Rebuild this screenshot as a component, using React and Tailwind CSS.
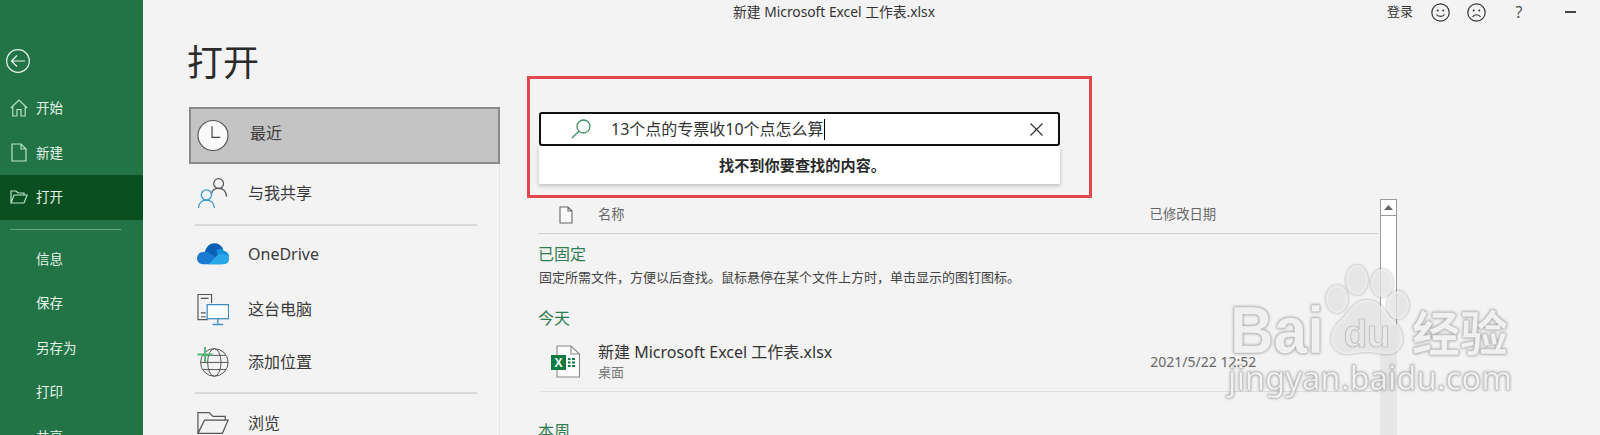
const FONT = { fontFamily: '"Noto Sans", "Noto Sans CJK SC", sans-serif' };

function Side({ icon, label, active, h = 'h-[44.5px]' }) {
  return (
    <div className={`flex items-center shrink-0 ${h} pl-[10px] ${active ? 'bg-[#0a4f20]' : ''}`}>
      <span className="w-[18px] h-[18px] flex items-center justify-center">{icon}</span>
      <span className="ml-[8px] text-[13.5px] text-[#e4f3e8]">{label}</span>
    </div>
  );
}

const sideStroke = { fill: 'none', stroke: '#b9e2c8', strokeWidth: 1.2 };

const HomeIcon = () => (
  <svg width="18" height="18" viewBox="0 0 18 18" {...sideStroke}>
    <path d="M0.8 9 L9 1 L17.2 9 M2.8 7.5 V17 H7 V10.5 H11 V17 H15.2 V7.5" />
  </svg>
);
const NewIcon = () => (
  <svg width="16" height="19" viewBox="0 0 16 19" {...sideStroke}>
    <path d="M1 1 H10 L15 6 V18 H1 Z M10 1 V6 H15" />
  </svg>
);
const OpenIcon = () => (
  <svg width="18" height="14" viewBox="0 0 18 14" {...sideStroke}>
    <path d="M1 13 V1 H6 L8 3 H14 V5 M1 13 L4 5 H17.2 L14 13 Z" />
  </svg>
);

function NavRow({ icon, label, h, extra }) {
  return (
    <div className={`flex items-center shrink-0 ${h} pl-[8px] ${extra || ''}`}>
      <span className="w-[32px] flex justify-center">{icon}</span>
      <span className="ml-[19px] text-[16px] text-[#3a3a3a]">{label}</span>
    </div>
  );
}

const ClockIcon = () => (
  <svg width="33" height="33" viewBox="0 0 33 33">
    <circle cx="16.5" cy="16.5" r="15.5" fill="#fafafa" stroke="#555" strokeWidth="1.2" />
    <path d="M15.5 7 V18.5 H24" fill="none" stroke="#444" strokeWidth="1.2" />
  </svg>
);
const PeopleIcon = () => (
  <svg width="34" height="34" viewBox="0 0 34 34" fill="none">
    <circle cx="23" cy="7" r="5.2" stroke="#555" strokeWidth="1.3" />
    <path d="M15.5 18 C16 13 19 12 23 12 C28 12 31 15 31.5 21" stroke="#555" strokeWidth="1.3" />
    <circle cx="10" cy="19" r="5.4" stroke="#3a9bd0" strokeWidth="1.4" />
    <path d="M1.5 33 C2 27 5 24.5 10 24.5 C15 24.5 18 27 18.5 33" stroke="#3a9bd0" strokeWidth="1.4" />
  </svg>
);
const CloudIcon = () => (
  <svg width="33" height="22" viewBox="0 0 33 22">
    <path d="M8 10 C9 3 14 0 18 0 C22 0 25 2 27 6 L20 16 L8 14 Z" fill="#0a5fb4" />
    <path d="M20 7 C23 5 26 5 28 8 C31 8 33 11 33 14 L22 16 Z" fill="#1490df" />
    <path d="M6 9 C10 8 12 9 14 11 L18 13 L25 21.5 H6 C2 21.5 0 18.5 0 15.5 C0 12 3 9 6 9 Z" fill="#1b7bd0" />
    <path d="M12 21.5 L21 12 C24 10 33 11 33 16 C33 19.5 31 21.5 28 21.5 Z" fill="#28a8ea" />
  </svg>
);
const PcIcon = () => (
  <svg width="33" height="33" viewBox="0 0 33 33" fill="none">
    <path d="M11 27 H1 V1 H15 V10" stroke="#555" strokeWidth="1.2" />
    <path d="M4 5 H12 M4 20 H9 M4 24 H9" stroke="#555" strokeWidth="1.2" />
    <rect x="10.5" y="11.5" width="22" height="14.5" fill="#fbfdff" stroke="#3d8ec4" strokeWidth="1.3" />
    <path d="M21.5 26 V31 M16 32 H27" stroke="#3d8ec4" strokeWidth="1.4" />
  </svg>
);
const GlobeIcon = () => (
  <svg width="36" height="36" viewBox="0 0 36 36" fill="none">
    <g stroke="#555" strokeWidth="1.1">
      <circle cx="19.5" cy="18.5" r="15.5" />
      <ellipse cx="19.5" cy="18.5" rx="7.5" ry="15.5" />
      <path d="M4 18.5 H35 M6.5 10.5 H32.5 M6.5 26.5 H32.5" />
    </g>
    <path d="M9 1 V18 M0.5 9.5 H17.5" stroke="#56b878" strokeWidth="2.2" />
  </svg>
);
const FolderIcon = () => (
  <svg width="34" height="24" viewBox="0 0 34 24" fill="none" stroke="#555" strokeWidth="1.3">
    <path d="M1 23 V1 H13 L17 5 H30 V9 M1 23 L8 9 H33 L27 23 Z" />
  </svg>
);

const FileHeadIcon = () => (
  <svg width="14" height="18" viewBox="0 0 14 18" fill="#fafafa" stroke="#666" strokeWidth="1.1">
    <path d="M1 1 H9 L13 5 V17 H1 Z M9 1 V5 H13" />
  </svg>
);

const ExcelIcon = () => (
  <svg width="30" height="33" viewBox="0 0 30 33">
    <path d="M6 1 H20 L28.5 9 V32 H6 Z" fill="#fbfbfb" stroke="#8a8a8a" strokeWidth="1.1" />
    <path d="M20 1 V9 H28.5" fill="none" stroke="#8a8a8a" strokeWidth="1.1" />
    <rect x="0" y="10" width="15" height="15" fill="#107c41" />
    <text x="7.5" y="21.5" textAnchor="middle" fill="#fff" fontSize="12" fontWeight="700" fontFamily="Liberation Sans, sans-serif">X</text>
    <path d="M17 14 H19.5 M21 14 H24 M17 17.5 H19.5 M21 17.5 H24 M17 21 H19.5 M21 21 H24" stroke="#107c41" strokeWidth="1.8" />
  </svg>
);

function Watermark() {
  const shadow = 'drop-shadow-[0_0_1.5px_rgba(0,0,0,0.45)]';
  return (
    <svg className={`absolute left-[1220px] top-[255px] ${shadow}`} width="300" height="155" viewBox="0 0 300 155">
      <g fill="#ffffff" fillOpacity="0.72">
        <ellipse cx="117" cy="44" rx="11" ry="14" />
        <ellipse cx="137" cy="25" rx="11" ry="15" />
        <ellipse cx="162" cy="28" rx="11" ry="14" />
        <ellipse cx="178" cy="50" rx="11" ry="14" />
        <path d="M147 45 C160 45 165 56 172 64 C184 74 186 88 178 95 C170 103 157 97 147 97 C136 97 124 103 116 95 C108 87 110 74 122 64 C130 56 134 45 147 45 Z" />
      </g>
      <text x="10" y="98" fontSize="66" fontWeight="700" fontFamily="Liberation Sans, sans-serif" fill="#fff" fillOpacity="0.85" stroke="#bdbdbd" strokeWidth="0.5" textLength="94" lengthAdjust="spacingAndGlyphs">Bai</text>
      <text x="147" y="92" textAnchor="middle" fontSize="38" fontWeight="700" fontFamily="Liberation Sans, sans-serif" fill="#e8e8e8" stroke="#b5b5b5" strokeWidth="0.7">du</text>
      <text x="192" y="96" fontSize="48" fontWeight="700" fontFamily="Noto Sans CJK SC, sans-serif" fill="#fff" fillOpacity="0.85" stroke="#c4c4c4" strokeWidth="0.5">经验</text>
      <text x="8" y="135" fontSize="33" fontFamily="Noto Sans, sans-serif" fill="#fff" fillOpacity="0.85" stroke="#bdbdbd" strokeWidth="0.5" textLength="284">jingyan.baidu.com</text>
    </svg>
  );
}

export default function App() {
  return (
    <div className="relative flex w-[1600px] h-[435px] overflow-hidden bg-[#f3f3f3]" style={FONT}>
      {/* Sidebar */}
      <aside className="w-[143px] shrink-0 bg-[#227447] flex flex-col pt-[49px]">
        <div className="pl-[6px] h-[24px] shrink-0 mb-[13px]">
          <svg width="24" height="24" viewBox="0 0 24 24" fill="none" stroke="#e8f5ec" strokeWidth="1.2">
            <circle cx="12" cy="12" r="11.3" />
            <path d="M19 12 H5.5 M11 6.5 L5.5 12 L11 17.5" />
          </svg>
        </div>
        <Side icon={<HomeIcon />} label="开始" />
        <Side icon={<NewIcon />} label="新建" />
        <Side icon={<OpenIcon />} label="打开" active />
        <div className="ml-[10px] mr-[22px] mt-[9px] mb-[7px] h-px shrink-0 bg-[#6ba583]" />
        <Side label="信息" />
        <Side label="保存" />
        <Side label="另存为" />
        <Side label="打印" />
        <Side label="共享" />
      </aside>

      {/* Content */}
      <div className="flex-1 flex flex-col min-w-0">
        <header className="h-[24px] shrink-0 flex items-center pl-[590px] text-[13px] text-[#333]">
          <span className="text-[13.8px]">新建 Microsoft Excel 工作表.xlsx</span>
          <div className="ml-auto flex items-center">
            <span className="w-[27px]">登录</span>
            <svg className="ml-[17px]" width="19" height="19" viewBox="0 0 19 19" fill="none" stroke="#333" strokeWidth="1.2">
              <circle cx="9.5" cy="9.5" r="8.7" />
              <circle cx="6.7" cy="7.5" r="1" fill="#333" stroke="none" />
              <circle cx="12.3" cy="7.5" r="1" fill="#333" stroke="none" />
              <path d="M5.5 11.5 C7 14 12 14 13.5 11.5" />
            </svg>
            <svg className="ml-[17px]" width="19" height="19" viewBox="0 0 19 19" fill="none" stroke="#333" strokeWidth="1.2">
              <circle cx="9.5" cy="9.5" r="8.7" />
              <circle cx="6.7" cy="7.5" r="1" fill="#333" stroke="none" />
              <circle cx="12.3" cy="7.5" r="1" fill="#333" stroke="none" />
              <path d="M5.5 14 C7 11 12 11 13.5 14" />
            </svg>
            <span className="ml-[28px] w-[10px] text-center text-[16px] text-[#555]">?</span>
            <span className="ml-[41px] mr-[24px] w-[11px] h-[1.5px] bg-[#444]" />
          </div>
        </header>

        <div className="flex flex-1 min-h-0">
          {/* Nav column */}
          <div className="w-[357px] shrink-0 pl-[46px] flex flex-col">
            <h1 className="mt-[17px] mb-[22px] -ml-[2px] h-[44px] shrink-0 text-[36px] leading-[44px] font-normal text-[#2b2b2b]">打开</h1>
            <div className="h-[57px] shrink-0 flex items-center pl-[8px] pb-px bg-[#c4c4c4] border-2 border-[#8a8a8a]">
              <span className="w-[32px] -ml-[2px] flex justify-center"><ClockIcon /></span>
              <span className="ml-[21px] -mt-[4px] text-[16px] text-[#3a3a3a]">最近</span>
            </div>
            <div className="flex-1 min-h-0 border-r border-[#e4e4e4]">
              <NavRow icon={<PeopleIcon />} label="与我共享" h="h-[60px]" extra="pb-[2px]" />
              <div className="ml-[6px] mr-[22px] h-[2px] bg-[#d9d9d9]" />
              <NavRow icon={<CloudIcon />} label="OneDrive" h="h-[56px]" />
              <NavRow icon={<PcIcon />} label="这台电脑" h="h-[54px]" />
              <NavRow icon={<GlobeIcon />} label="添加位置" h="h-[56px]" extra="pb-[4px]" />
              <div className="ml-[6px] mr-[22px] h-[2px] bg-[#d9d9d9]" />
              <NavRow icon={<FolderIcon />} label="浏览" h="h-[58px]" />
            </div>
          </div>

          {/* Main column */}
          <div className="flex-1 min-w-0 pl-[38px] pt-[88px] flex flex-col">
            <div className="relative ml-px w-[521px] h-[34px] shrink-0 flex items-center bg-white border-2 border-[#111] rounded-[3px]">
              <svg className="ml-[30px]" width="20" height="20" viewBox="0 0 20 20" fill="none" stroke="#3f8f60" strokeWidth="1.3">
                <circle cx="12.5" cy="7.5" r="6.5" />
                <path d="M7.8 12.2 L1 19" />
              </svg>
              <span className="ml-[20px] text-[16px] text-[#333]">13个点的专票收10个点怎么算</span>
              <span className="w-px h-[21px] bg-black" />
              <svg className="ml-auto mr-[15px]" width="13" height="13" viewBox="0 0 13 13" stroke="#333" strokeWidth="1.2">
                <path d="M0.5 0.5 L12.5 12.5 M12.5 0.5 L0.5 12.5" />
              </svg>
              <div className="absolute -left-[2px] top-[32px] w-[521px] h-[38px] pl-[6px] bg-white shadow-[0_2px_4px_rgba(0,0,0,0.22)] flex items-center justify-center text-[15.2px] font-bold text-[#2b2b2b]">
                找不到你要查找的内容。
              </div>
            </div>

            <div className="h-[38px] shrink-0 flex items-end pl-[4px]">
              <div className="w-[50px] h-[1.5px] bg-[#217346]" />
            </div>

            <div className="flex flex-1 min-h-0">
              <div className="w-[840px] shrink-0 flex flex-col">
                <div className="h-[50px] shrink-0 flex items-center pt-[13px] border-b border-[#d0d0d0] text-[13.3px] text-[#666]">
                  <span className="ml-[21px]"><FileHeadIcon /></span>
                  <span className="ml-[25px]">名称</span>
                  <span className="ml-[525px]">已修改日期</span>
                </div>
                <div className="mt-[8px] shrink-0 text-[16px] leading-[24px] text-[#2f7d51]">已固定</div>
                <div className="mt-px shrink-0 text-[13px] leading-[20px] text-[#444] pl-px">{'固定所需文件\uFF0C方便以后查找。鼠标悬停在某个文件上方时\uFF0C单击显示的图钉图标。'}</div>
                <div className="mt-[19px] shrink-0 text-[16px] leading-[24px] text-[#2f7d51]">今天</div>
                <div className="h-[62px] shrink-0 ml-[3px] flex items-center border-b border-[#dedede]">
                  <span className="ml-[10px] mt-[2px]"><ExcelIcon /></span>
                  <div className="ml-[17px] mt-px flex flex-col">
                    <span className="text-[16px] leading-[22px] text-[#333]">新建 Microsoft Excel 工作表.xlsx</span>
                    <span className="text-[13px] leading-[18px] text-[#777]">桌面</span>
                  </div>
                  <span className="ml-[318px] mt-px text-[14px] text-[#666]">2021/5/22 12:52</span>
                </div>
                <div className="mt-[27px] shrink-0 text-[16px] leading-[24px] text-[#2f7d51]">本周</div>
              </div>
              <div className="ml-[2px] mt-[15px] w-[17px] flex flex-col bg-[#e6e6e6]">
                <div className="h-[17px] shrink-0 bg-white border border-[#9a9a9a] flex items-center justify-center">
                  <svg width="9" height="5" viewBox="0 0 9 5"><path d="M4.5 0 L9 5 H0 Z" fill="#666" /></svg>
                </div>
                <div className="h-[110px] shrink-0 bg-white border-x border-[#9a9a9a]" />
              </div>
            </div>
          </div>
        </div>
      </div>

      {/* Red annotation */}
      <div className="absolute left-[527px] top-[76px] w-[565px] h-[122px] border-[3px] border-[#e2474b] pointer-events-none" />
      <Watermark />
    </div>
  );
}
